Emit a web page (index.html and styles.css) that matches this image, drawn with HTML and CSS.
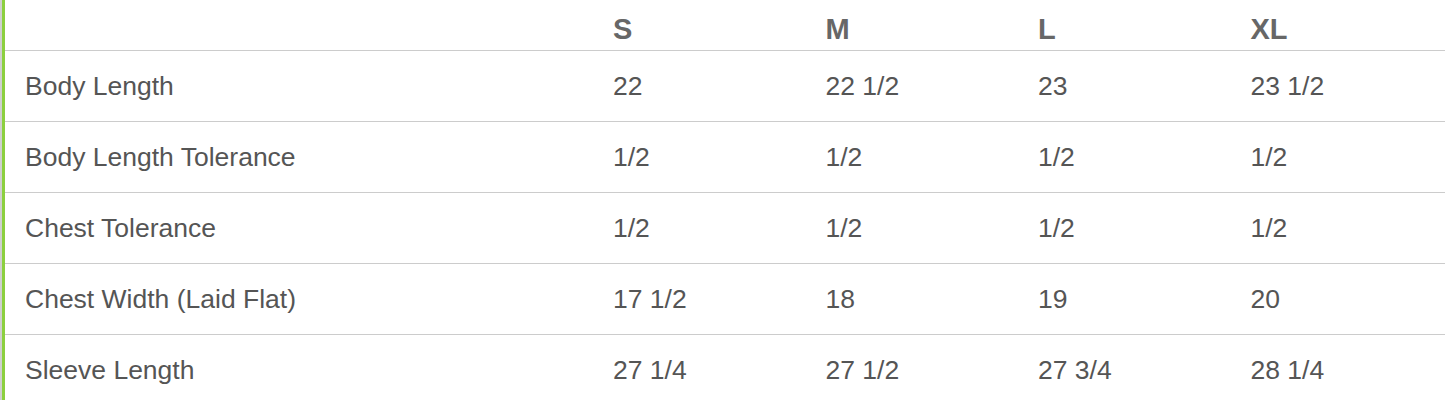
FILE: index.html
```html
<!DOCTYPE html>
<html>
<head>
<meta charset="utf-8">
<link rel="stylesheet" href="styles.css">
</head>
<body>
<div class="frame">
  <div class="panel">
    <div class="size-table">
      <div class="row head">
        <div class="cell"></div>
        <div class="cell">S</div>
        <div class="cell">M</div>
        <div class="cell">L</div>
        <div class="cell">XL</div>
      </div>
      <div class="row">
        <div class="cell">Body Length</div>
        <div class="cell">22</div>
        <div class="cell">22 1/2</div>
        <div class="cell">23</div>
        <div class="cell">23 1/2</div>
      </div>
      <div class="row">
        <div class="cell">Body Length Tolerance</div>
        <div class="cell">1/2</div>
        <div class="cell">1/2</div>
        <div class="cell">1/2</div>
        <div class="cell">1/2</div>
      </div>
      <div class="row">
        <div class="cell">Chest Tolerance</div>
        <div class="cell">1/2</div>
        <div class="cell">1/2</div>
        <div class="cell">1/2</div>
        <div class="cell">1/2</div>
      </div>
      <div class="row">
        <div class="cell">Chest Width (Laid Flat)</div>
        <div class="cell">17 1/2</div>
        <div class="cell">18</div>
        <div class="cell">19</div>
        <div class="cell">20</div>
      </div>
      <div class="row last">
        <div class="cell">Sleeve Length</div>
        <div class="cell">27 1/4</div>
        <div class="cell">27 1/2</div>
        <div class="cell">27 3/4</div>
        <div class="cell">28 1/4</div>
      </div>
    </div>
  </div>
</div>
</body>
</html>
```
FILE: styles.css
```css
html, body {
  margin: 0;
  padding: 0;
  background: #ffffff;
}
body {
  font-family: "Liberation Sans", Arial, sans-serif;
  color: #555555;
}
.frame {
  border-left: 2px solid #cfcfcf;
  height: 400px;
  box-sizing: border-box;
}
.panel {
  border-left: 3px solid #8ccf3f;
  height: 400px;
  box-sizing: border-box;
}
.size-table {
  width: 1440px;
}
.row {
  display: grid;
  grid-template-columns: 590px repeat(4, 1fr);
  height: 71px;
  border-bottom: 1px solid #cccccc;
  box-sizing: border-box;
  align-items: center;
  font-size: 26.5px;
}
.row.head {
  height: 51px;
  font-size: 29px;
  font-weight: bold;
  color: #676767;
  align-items: end;
  padding-bottom: 4px;
}
.row.last {
  border-bottom: none;
}
.cell {
  padding-left: 18px;
  white-space: nowrap;
}
.cell:first-child {
  padding-left: 20px;
}
```
